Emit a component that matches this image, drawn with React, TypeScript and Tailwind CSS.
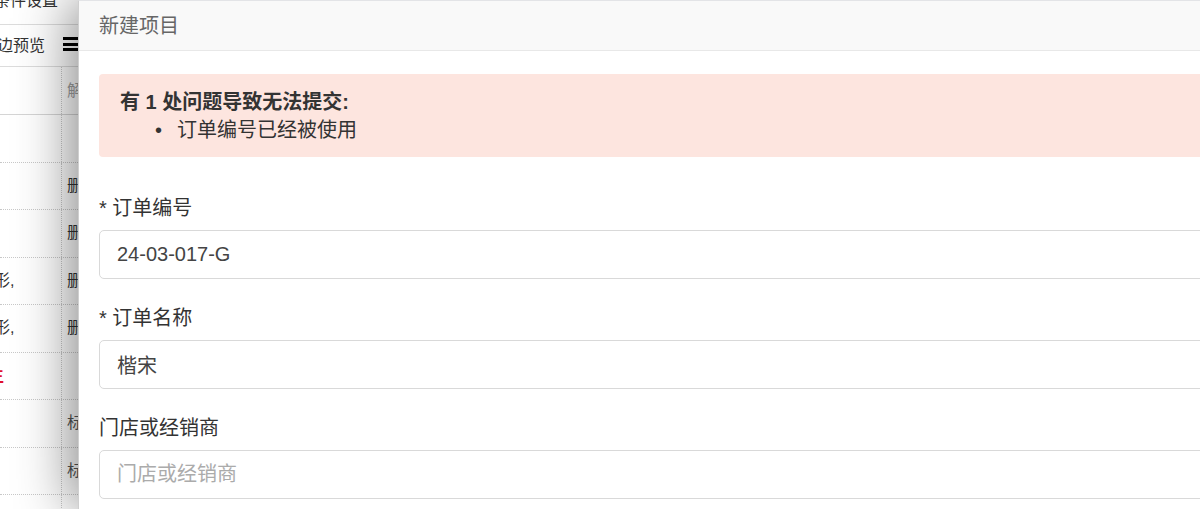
import React from "react";

const rows: { left?: React.ReactNode; right?: React.ReactNode }[] = [
  {},
  { right: <span className="text-[#333]">删除</span> },
  { right: <span className="text-[#333]">删除</span> },
  { left: <span className="-ml-[6px] text-[#333]">形,</span>, right: <span className="text-[#333]">删除</span> },
  { left: <span className="-ml-[6px] text-[#333]">形,</span>, right: <span className="text-[#333]">删除</span> },
  { left: <span className="-ml-[12px] text-[#e0102f] font-bold">生</span> },
  { right: <span className="text-[#555]">标签</span> },
  { right: <span className="text-[#555]">标签</span> },
  {},
];

function Field({ label, required, value, placeholder, first }: { label: string; required?: boolean; value?: string; placeholder?: string; first?: boolean }) {
  return (
    <div className={first ? "mt-[37px]" : "mt-[25px]"}>
      <div className="leading-[28px] text-[20px] text-[#333] mb-[8px] whitespace-nowrap">
        {required && <span className="text-[#333]">* </span>}
        {label}
      </div>
      <input
        readOnly
        defaultValue={value}
        placeholder={placeholder}
        className="block w-full h-[49px] border border-[#d9d9d9] rounded-[5px] pl-[17px] text-[20px] text-[#444] placeholder:text-[#ababab] bg-white outline-none"
      />
    </div>
  );
}

export default function App() {
  return (
    <div className="w-[1200px] h-[509px] overflow-hidden flex bg-white font-['Liberation_Sans','Noto_Sans_CJK_SC',sans-serif]">
      {/* background page, mostly hidden under the dialog */}
      <div className="w-[78px] shrink-0 overflow-hidden text-[16px] text-[#333]">
        <div className="h-[25px] border-b border-[#dcdcdc] overflow-hidden">
          <div className="-mt-[8px] -ml-[6px] leading-[18px] whitespace-nowrap">条件设置</div>
        </div>
        <div className="h-[42px] border-b border-[#dcdcdc] flex items-center whitespace-nowrap">
          <span className="-ml-[19px] w-[64px] shrink-0 leading-[20px]">侧边预览</span>
          <div className="ml-[18px] -mt-[3px] shrink-0 flex flex-col gap-[2.5px]">
            <div className="w-[18px] h-[3px] bg-[#000]" />
            <div className="w-[18px] h-[3px] bg-[#000]" />
            <div className="w-[18px] h-[3px] bg-[#000]" />
          </div>
        </div>
        <div className="h-[48px] border-b border-[#d5d5d5] flex">
          <div className="w-[62px] shrink-0 h-full border-r border-dotted border-[#c8c8c8]" />
          <div className="pl-[5px] flex items-center whitespace-nowrap text-[#a0a0a0]">解析</div>
        </div>
        {rows.map((r, i) => (
          <div key={i} className="h-[47.5px] border-b border-dotted border-[#c8c8c8] flex">
            <div className="w-[62px] shrink-0 h-full border-r border-dotted border-[#c8c8c8] overflow-hidden flex items-center whitespace-nowrap">
              {r.left}
            </div>
            <div className="pl-[5px] flex items-center whitespace-nowrap">{r.right}</div>
          </div>
        ))}
      </div>

      {/* dialog */}
      <div className="relative z-10 w-[1160px] shrink-0 h-full bg-white border-l border-t border-l-[#cfcfcf] border-t-[#e3e4e7] shadow-[-8px_0_50px_rgba(0,0,0,0.45)]">
        <div className="h-[50px] bg-[#f9f9f9] border-b border-[#e8e8e8] flex items-center pl-[20px] text-[20px] text-[#666]">
          新建项目
        </div>
        <div className="px-[20px] pt-[23px]">
          <div className="rounded-[4px] bg-[#fde5df] pt-[14px] pb-[13px] pl-[21px] text-[20px] leading-[28px] text-[#333]">
            <div className="font-bold">有 1 处问题导致无法提交:</div>
            <ul className="pl-[35px]">
              <li className="flex">
                <span className="w-[22px] shrink-0">•</span>
                <span>订单编号已经被使用</span>
              </li>
            </ul>
          </div>
          <Field first required label="订单编号" value="24-03-017-G" />
          <Field required label="订单名称" value="楷宋" />
          <Field label="门店或经销商" placeholder="门店或经销商" />
        </div>
      </div>
    </div>
  );
}
